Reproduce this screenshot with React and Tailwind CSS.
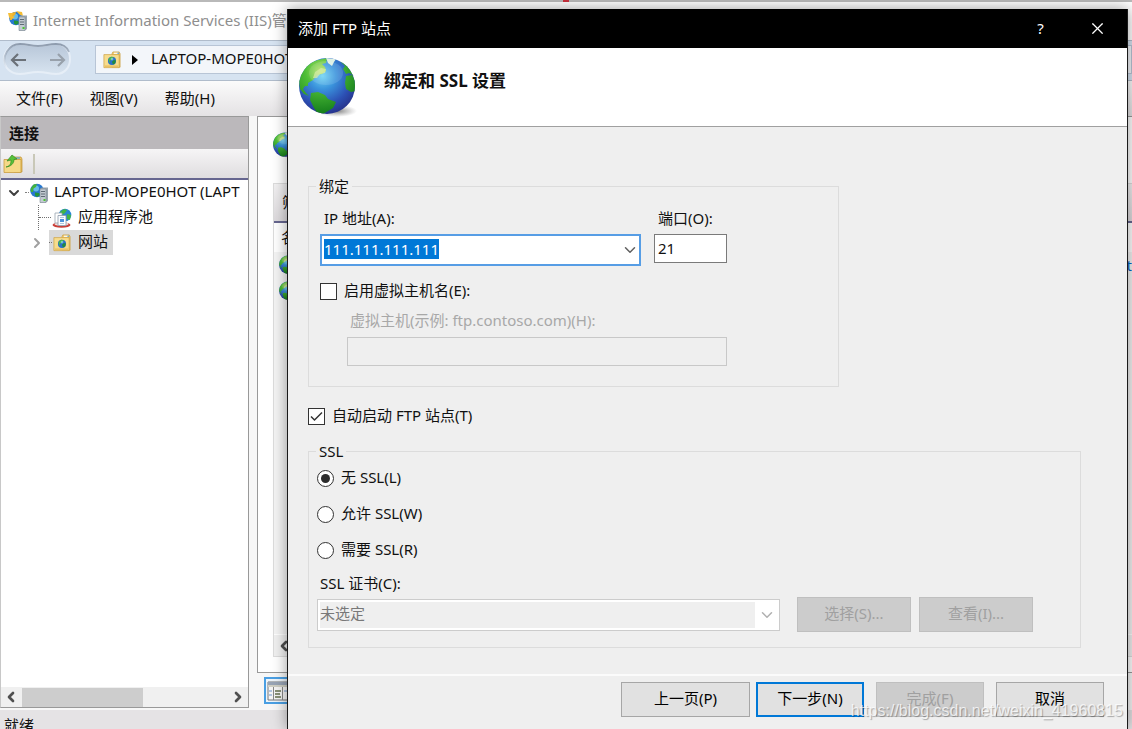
import { useEffect, useId, useRef } from 'react'
import { ChevronDown, ChevronLeft, ChevronRight, X } from 'lucide-react'
import clsx from 'clsx'

const Globe = ({ className }) => {
  const id = useId()
  return (
    <svg viewBox="0 0 60 60" className={className} aria-hidden="true">
      <defs>
        <radialGradient id={`${id}sea`} cx="0.42" cy="0.32" r="0.68">
          <stop offset="0" stopColor="#6fd3f4" />
          <stop offset="0.35" stopColor="#3a93dc" />
          <stop offset="0.75" stopColor="#2c50b4" />
          <stop offset="1" stopColor="#27358f" />
        </radialGradient>
        <radialGradient id={`${id}land`} gradientUnits="userSpaceOnUse" cx="22" cy="14" r="44">
          <stop offset="0" stopColor="#b5e36c" />
          <stop offset="0.35" stopColor="#4fbf38" />
          <stop offset="1" stopColor="#127a1a" />
        </radialGradient>
        <radialGradient id={`${id}shade`}>
          <stop offset="0" stopColor="#555" stopOpacity="0.75" />
          <stop offset="1" stopColor="#888" stopOpacity="0" />
        </radialGradient>
        <clipPath id={`${id}clip`}>
          <circle cx="28" cy="29" r="28" />
        </clipPath>
      </defs>
      <ellipse cx="38" cy="54" rx="20" ry="6" fill={`url(#${id}shade)`} />
      <circle cx="28" cy="29" r="28" fill={`url(#${id}sea)`} />
      <g clipPath={`url(#${id}clip)`} fill={`url(#${id}land)`}>
        <path d="M0 24C2 13 10 5 19 3l9-2-1 5-4 1 3 3 1 4-4 3-5 1-4 5-5 3 0 3-3 0-2 3 3 4 3 3-5-2-4-5z" />
        <path d="M12 36l7-1 7 3 3 4 8 3-3 6-5 3-5 3-5 0-4-6-4-8z" />
        <path d="M41 4l8 5 5 7 1 3-5-3-3 1-3-5 2-3z" />
        <path d="M47 19l6-1 4 6 0 10-5 1-5-3-1-6z" />
        <path d="M27 1l10 1-2 3-2 4-4-3z" fill="#dff0e4" />
        <path d="M16 15l6-4 5 1-1 4-5 1-3 4-4 0z" fill="#d5eaa0" opacity="0.7" />
      </g>
      <ellipse cx="27" cy="16" rx="17" ry="12" fill="#fff" opacity="0.12" />
    </svg>
  )
}

const FolderGlobe = ({ className }) => (
  <svg viewBox="0 0 20 20" className={clsx('shrink-0', className)} aria-hidden="true">
    <path d="M10 3l1-2h7l1 2v15h-9z" fill="#efc765" stroke="#c79b3a" strokeWidth="0.7" />
    <path d="M12 2.5h5" stroke="#fff" strokeWidth="1.3" />
    <path d="M16 2.5h2" stroke="#5fa4dc" strokeWidth="1.3" />
    <path d="M1 4h17v14.5H1z" fill="#f7dc8c" stroke="#cda244" strokeWidth="0.8" />
    <path d="M2 16h15v2H2z" fill="#eac265" />
    <circle cx="10" cy="11" r="4.5" fill="#2b70c9" />
    <path d="M6 9l3-2.5 3 .5-2 2.5-2 1-1 3z" fill="#49b741" />
    <path d="M12 10l2.4.5-1 3.5-2.4 1-1-3z" fill="#238a3c" />
    <circle cx="10" cy="9" r="1.5" fill="#9de2f7" opacity="0.6" />
  </svg>
)

const ServerGlobe = ({ className, gold }) => (
  <svg viewBox="0 0 20 20" className={clsx('shrink-0', className)} aria-hidden="true">
    <circle cx="8" cy="7.5" r="6.8" fill="#2878cf" />
    <circle cx="7" cy="5.5" r="3" fill="#7fd8f5" opacity="0.7" />
    <path d="M1.5 6l3-4.5L8 1 7 4 4.5 5.5 4 9 2 9z" fill={gold ? '#f0b22a' : '#43b33c'} />
    <path d="M6 9.5l4 .5 1 2-3 2-2-1.5z" fill="#24953a" />
    {gold && <path d="M0 2h5l-1 3 3 1-3 2-3-2zM8 0l6 1 1 4-3-1z" fill="#f5bd35" />}
    <path d="M11 6l2-1.5h6V18l-2 1.5h-6z" fill="#9aa5ae" />
    <path d="M11 6h6v13.5h-6z" fill="#c3cbd2" stroke="#7e8a94" strokeWidth="0.6" />
    <path d="M12 8.5h4M12 11h4M12 13.5h4" stroke="#5f6b75" />
    <path d="M14.5 16h2v2h-2z" fill="#48c72e" />
  </svg>
)

const AppPool = ({ className }) => (
  <svg viewBox="0 0 20 20" className={clsx('shrink-0', className)} aria-hidden="true">
    <circle cx="13" cy="7" r="6.3" fill="#2a86d3" />
    <path d="M8 4l4-3 3 1-2 3-3 2zM15 6l4 1-1 5-3-1z" fill="#42b546" />
    <ellipse cx="9.5" cy="17" rx="9" ry="2.8" fill="#c9403a" />
    <ellipse cx="9.5" cy="16" rx="7" ry="1.8" fill="#f3dede" />
    <path d="M3 5h7v10H3z" fill="#fff" stroke="#9aa4b0" strokeWidth="0.8" />
    <path d="M6 7.5h8v10H6z" fill="#fbfdff" stroke="#8b98a8" strokeWidth="0.8" />
    <path d="M8 11h4v3H8z" fill="#4f91d8" />
    <path d="M8 9.5h4M8 15.5h4" stroke="#9db9d8" strokeWidth="0.8" />
  </svg>
)

const FolderUp = ({ className }) => (
  <svg viewBox="0 0 20 20" className={clsx('shrink-0', className)} aria-hidden="true">
    <path d="M11 3h7l1 2v13h-8z" fill="#edc466" stroke="#bf9335" strokeWidth="0.7" />
    <path d="M13 4h4" stroke="#5fa4dc" strokeWidth="1.3" />
    <path d="M1 5.5h17v13H1z" fill="#f6d988" stroke="#c99d40" strokeWidth="0.8" />
    <path d="M3 13c4-1 5-3 5-7L4 7l5-6 5 4-3 .5c0 4-3 7-8 7.5z" fill="#57c13a" stroke="#318b22" strokeWidth="0.7" />
  </svg>
)

const NavButtons = () => (
  <svg viewBox="0 0 70 36" className="h-9 w-[70px] shrink-0" aria-hidden="true">
    <defs>
      <linearGradient id="pill" x1="0" y1="0" x2="0" y2="1">
        <stop offset="0" stopColor="#b7c6d8" />
        <stop offset="1" stopColor="#d8e4f0" />
      </linearGradient>
      <linearGradient id="rim" x1="0" y1="0" x2="0" y2="1">
        <stop offset="0" stopColor="#8d9bad" />
        <stop offset="1" stopColor="#8d9bad" stopOpacity="0" />
      </linearGradient>
    </defs>
    <path
      d="M18 2c8 0 10 2 18 2s10-2 18-2c9 0 14 7 14 15s-5 15-14 15c-8 0-9-2-18-2s-10 2-18 2C8 32 2 25 2 17S9 2 18 2z"
      fill="url(#pill)"
      stroke="#e6eef7"
      strokeWidth="2"
    />
    <path
      d="M4 26C-1 14 7 2 18 2c8 0 10 2 18 2s10-2 18-2c6 0 11 3 13 8"
      fill="none"
      stroke="url(#rim)"
      strokeWidth="1.8"
    />
    <path d="M24 18H10m6-6l-6 6 6 6" fill="none" stroke="#6b7178" strokeWidth="2.2" />
    <path d="M48 18h14m-6-6l6 6-6 6" fill="none" stroke="#98a1ab" strokeWidth="2.2" />
  </svg>
)

const CheckBox = ({ label, defaultChecked, className }) => (
  <label className={clsx('flex h-5 items-center gap-[7px]', className)}>
    <span className="grid size-[17px] place-items-center">
      <input
        type="checkbox"
        defaultChecked={defaultChecked}
        className="peer col-start-1 row-start-1 size-[17px] appearance-none border border-[#333] bg-white"
      />
      <svg
        viewBox="0 0 17 17"
        className="pointer-events-none invisible col-start-1 row-start-1 size-[17px] peer-checked:visible"
      >
        <path d="M3 8.5l3.5 3.5L14 4.5" fill="none" stroke="#333" strokeWidth="1.5" />
      </svg>
    </span>
    <span className="pb-[2px]">{label}</span>
  </label>
)

const Radio = ({ label, defaultChecked }) => (
  <label className="flex h-5 items-center gap-[7px]">
    <input
      type="radio"
      name="ssl"
      defaultChecked={defaultChecked}
      className="grid size-[17px] appearance-none place-items-center rounded-full border border-[#333] bg-white checked:before:size-[9px] checked:before:rounded-full checked:before:bg-[#2b2b2b] checked:before:content-['']"
    />
    <span className="pb-[2px]">{label}</span>
  </label>
)

const DialogButton = ({ children, className, ...props }) => (
  <button
    type="button"
    className={clsx(
      'h-[35px] bg-[#e1e1e1] pb-[3px] text-black disabled:border-[#bfbfbf] disabled:bg-[#cccccc] disabled:text-[#a0a0a0]',
      className,
    )}
    {...props}
  >
    {children}
  </button>
)

const Connections = () => (
  <aside className="flex w-[249px] shrink-0 flex-col border border-[#999] border-l-[#c8c8c8] bg-white">
    <h2 className="h-8 shrink-0 bg-[#bbb8bb] pl-2 leading-8 font-bold">连接</h2>
    <div className="flex h-[31px] shrink-0 items-center border-b-2 border-[#66668f] bg-linear-to-b from-[#f6f5f6] to-[#dfdddf] pl-[2px]">
      <FolderUp className="size-5" />
      <span className="ml-[10px] h-5 w-[2px] bg-[#c9c8b8]" />
    </div>
    <ul className="flex-1 overflow-hidden whitespace-nowrap">
      <li>
        <div className="flex h-[25px] items-center">
          <ChevronDown className="ml-[5px] size-4 shrink-0 text-[#404040]" strokeWidth={3} />
          <span className="ml-[3px] w-1 border-t border-dotted border-[#808080]" />
          <ServerGlobe className="size-5" />
          <span className="ml-[5px] pb-[3px]">LAPTOP-MOPE0HOT (LAPT</span>
        </div>
        <ul>
          <li className="flex h-[25px] items-center pl-[37px]">
            <span className="h-[25px] border-l border-dotted border-[#707070]" />
            <span className="w-3 border-t border-dotted border-[#707070]" />
            <AppPool className="ml-[1px] size-5" />
            <span className="ml-[6px] pb-[3px]">应用程序池</span>
          </li>
          <li className="flex h-[25px] items-center pl-7">
            <ChevronRight className="size-4 text-[#a0a0a0]" strokeWidth={3} />
            <span className="ml-1 flex h-[25px] items-center bg-[#d9d9d9] pr-[5px]">
              <span className="w-[3px] border-t border-dotted border-[#707070]" />
              <FolderGlobe className="ml-[1px] size-[18px]" />
              <span className="ml-[7px] pb-[3px]">网站</span>
            </span>
          </li>
        </ul>
      </li>
    </ul>
    <div className="flex h-5 shrink-0 items-center bg-[#f0f0f0]">
      <ChevronLeft className="ml-[2px] size-4 text-[#505050]" strokeWidth={4} />
      <span className="ml-[3px] h-[19px] w-[121px] bg-[#cdcdcd]" />
      <ChevronRight className="mr-[2px] ml-auto size-4 text-[#505050]" strokeWidth={4} />
    </div>
  </aside>
)

const SitesPane = () => (
  <main className="flex min-w-0 flex-1 flex-col">
    <section className="flex flex-1 flex-col border border-r-0 border-[#999] bg-white pl-[15px]">
      <Globe className="mt-[15px] size-[26px]" />
      <div className="mt-[25px] mb-[15px] flex flex-1 flex-col border border-r-0 border-[#dcdcdc] bg-[#f4f4f4]">
        <div className="h-[39px] border-b-2 border-[#66668f] bg-linear-to-b from-[#f2f1f2] to-[#dddadd] pl-2 leading-[36px]">
          筛
        </div>
        <div className="h-[29px] bg-white pl-[7px] leading-[29px]">名</div>
        <div className="flex h-[26px] items-center justify-between pl-[5px]">
          <Globe className="size-5" />
          <span className="text-[#0066cc]">t</span>
        </div>
        <div className="flex h-[26px] items-center pl-[5px]">
          <Globe className="size-5" />
        </div>
        <div className="mt-auto flex h-[22px] items-center justify-between border-t border-white bg-[#f0f0f0] pl-[2px]">
          <ChevronLeft className="size-4 text-[#505050]" strokeWidth={4} />
          <ChevronRight className="size-4 text-[#505050]" strokeWidth={4} />
        </div>
      </div>
    </section>
    <div className="flex h-[35px] shrink-0 items-start pt-1 pl-[7px]">
      <button type="button" aria-label="功能视图" className="h-[27px] w-24 border-2 border-[#4a9fe3] bg-[#eef5fb] p-[1px]">
        <svg viewBox="0 0 22 20" className="h-5 w-[22px]" aria-hidden="true">
          <path d="M1 1h21v18H1z" fill="#f5f5f5" stroke="#777" />
          <path d="M1 1h21v3H1z" fill="#98a4b5" />
          <path d="M1 4h21v2H1z" fill="#cfcfc4" />
          <path d="M6.5 6v13M15.5 6v13" stroke="#888" />
          <path d="M8 10h6M8 13h5M8 16h6" stroke="#65704d" strokeWidth="1.5" />
          <path d="M2 10h3M2 14h3M17 10h4" stroke="#6f93c7" />
        </svg>
      </button>
    </div>
  </main>
)

const FtpDialog = () => {
  const ip = useRef(null)

  useEffect(() => {
    ip.current?.focus()
    ip.current?.select()
  }, [])

  return (
    <div
      role="dialog"
      aria-labelledby="dialog-title"
      className="absolute top-[9px] right-1 bottom-0 left-[287px] flex flex-col border-x border-[#1a1a1a] bg-[#efefef] shadow-[0_0_14px_rgba(0,0,0,0.4)]"
    >
      <header className="flex h-[39px] shrink-0 items-center bg-black pr-[1px] pl-[10px] text-white">
        <h1 id="dialog-title" className="pb-[2px]">
          添加 FTP 站点
        </h1>
        <button type="button" aria-label="帮助" className="ml-auto w-[57px] pb-[2px]">
          ?
        </button>
        <button type="button" aria-label="关闭" className="flex w-[57px] justify-center">
          <X className="size-[19px]" strokeWidth={1.5} />
        </button>
      </header>
      <div className="flex h-[79px] shrink-0 items-start border-b border-[#a0a0a0] bg-white pt-[9px] pl-[11px]">
        <Globe className="size-[60px]" />
        <h2 className="ml-[25px] pt-3 text-[17px] leading-6 font-bold">绑定和 SSL 设置</h2>
      </div>

      <form className="flex-1 pt-[49px] pr-[46px] pl-5">
        <fieldset className="h-[211px] max-w-[531px] border border-[#dcdcdc] pl-[11px]">
          <legend className="-ml-1 px-[3px]">绑定</legend>
          <div className="flex gap-[13px] pt-3">
            <div className="w-[321px]">
              <label htmlFor="ip" className="block pl-1">
                IP 地址(A):
              </label>
              <div className="mt-[6px] flex h-8 items-center border-2 border-[#569de5] bg-white pl-[2px]">
                <input
                  id="ip"
                  ref={ip}
                  role="combobox"
                  aria-expanded="false"
                  defaultValue="111.111.111.111"
                  className="min-w-0 flex-1 pb-[2px] outline-none selection:bg-[#0078d7] selection:text-white"
                />
                <button type="button" aria-label="展开">
                  <ChevronDown className="size-[18px] text-[#606060]" strokeWidth={2} />
                </button>
              </div>
            </div>
            <div className="w-[73px]">
              <label htmlFor="port" className="block pl-1 whitespace-nowrap">
                端口(O):
              </label>
              <input
                id="port"
                defaultValue="21"
                className="mt-[6px] h-[29px] w-full border border-[#7a7a7a] bg-white px-[3px] pb-[2px] outline-none"
              />
            </div>
          </div>
          <CheckBox label="启用虚拟主机名(E):" className="mt-[15px]" />
          <label htmlFor="host" className="mt-[9px] block pl-[30px] text-[#a8a8a8]">
            虚拟主机(示例: ftp.contoso.com)(H):
          </label>
          <input id="host" disabled className="mt-[7px] ml-[27px] h-[29px] w-[380px] border border-[#c8c8c8] bg-[#efefef]" />
        </fieldset>

        <CheckBox label="自动启动 FTP 站点(T)" defaultChecked className="mt-[19px]" />

        <fieldset className="mt-[15px] h-[207px] border border-[#dcdcdc] pl-2">
          <legend className="-ml-[1px] px-[3px]">SSL</legend>
          <div className="flex flex-col gap-4 pt-[7px]">
            <Radio label="无 SSL(L)" defaultChecked />
            <Radio label="允许 SSL(W)" />
            <Radio label="需要 SSL(R)" />
          </div>
          <label htmlFor="cert" className="mt-[13px] block pl-[3px]">
            SSL 证书(C):
          </label>
          <div className="mt-1 flex items-center">
            <div className="flex h-8 w-[463px] items-center border border-[#cccccc] bg-white py-[2px] pl-[2px]">
              <select
                id="cert"
                disabled
                className="h-full flex-1 appearance-none bg-[#efefef] pb-[3px] text-[#787878] opacity-100"
              >
                <option>未选定</option>
              </select>
              <ChevronDown className="mx-[3px] size-[18px] text-[#b0b0b0]" strokeWidth={2} />
            </div>
            <DialogButton disabled className="ml-[17px] w-[114px] border">
              选择(S)...
            </DialogButton>
            <DialogButton disabled className="ml-2 w-[114px] border">
              查看(I)...
            </DialogButton>
          </div>
        </fieldset>
      </form>

      <footer className="flex h-[55px] shrink-0 justify-end border-t-2 border-[#fbfbfb] pt-[6px] pr-[23px]">
        <DialogButton className="w-[129px] border border-[#a6a6a6]">上一页(P)</DialogButton>
        <DialogButton className="ml-[6px] w-[108px] border-2 border-[#0078d7]">下一步(N)</DialogButton>
        <DialogButton disabled className="ml-3 w-[108px] border">
          完成(F)
        </DialogButton>
        <DialogButton className="ml-3 w-[108px] border border-[#a6a6a6]">取消</DialogButton>
      </footer>
    </div>
  )
}

export default function App() {
  return (
    <div className="relative flex h-screen flex-col overflow-hidden bg-[#f7f7f7] font-['Noto_Sans','Noto_Sans_CJK_SC',sans-serif] text-[15px] leading-5 text-[#111]">
      <div className="flex h-[2px] shrink-0 justify-center bg-[#b9b9b9]">
        <span className="w-[6px] bg-[#c9303c]" />
      </div>
      <header className="flex h-[38px] shrink-0 items-center bg-white pl-2 whitespace-nowrap text-[#8e8e8e]">
        <ServerGlobe gold className="mr-[5px] size-5" />
        <span className="pb-[2px]">Internet Information Services (IIS)管</span>
      </header>
      <nav className="flex h-[41px] shrink-0 items-center border-y border-[#b0bccb] bg-[#d6e3f1] pb-[2px] pl-[2px]">
        <NavButtons />
        <div className="ml-[23px] flex h-[29px] flex-1 items-center border border-[#b8c5d6] bg-[#f3f6fa] pl-[7px]">
          <FolderGlobe className="size-[18px]" />
          <svg viewBox="0 0 6 10" className="mr-[13px] ml-[11px] h-[10px] w-[6px]">
            <path d="M0 0l6 5-6 5z" fill="#000" />
          </svg>
          <span className="pb-1">LAPTOP-MOPE0HOT</span>
        </div>
      </nav>
      <div className="flex h-[35px] shrink-0 items-center gap-[27px] bg-linear-to-b from-[#fbfbfb] to-[#e4e2e4] pb-[2px] pl-4">
        <button type="button">文件(F)</button>
        <button type="button">视图(V)</button>
        <button type="button">帮助(H)</button>
      </div>
      <div className="flex min-h-0 flex-1 gap-2 pb-[2px]">
        <Connections />
        <SitesPane />
      </div>
      <footer className="h-[19px] shrink-0 bg-[#e5e3e5] pt-[5px] pl-1">就绪</footer>

      <FtpDialog />
      <span className="pointer-events-none absolute right-[9px] bottom-2 font-['Liberation_Sans',sans-serif] text-[16px] text-white/75 [text-shadow:1px_1px_1px_rgba(0,0,0,0.3)]">
        https://blog.csdn.net/weixin_41960815
      </span>
    </div>
  )
}
